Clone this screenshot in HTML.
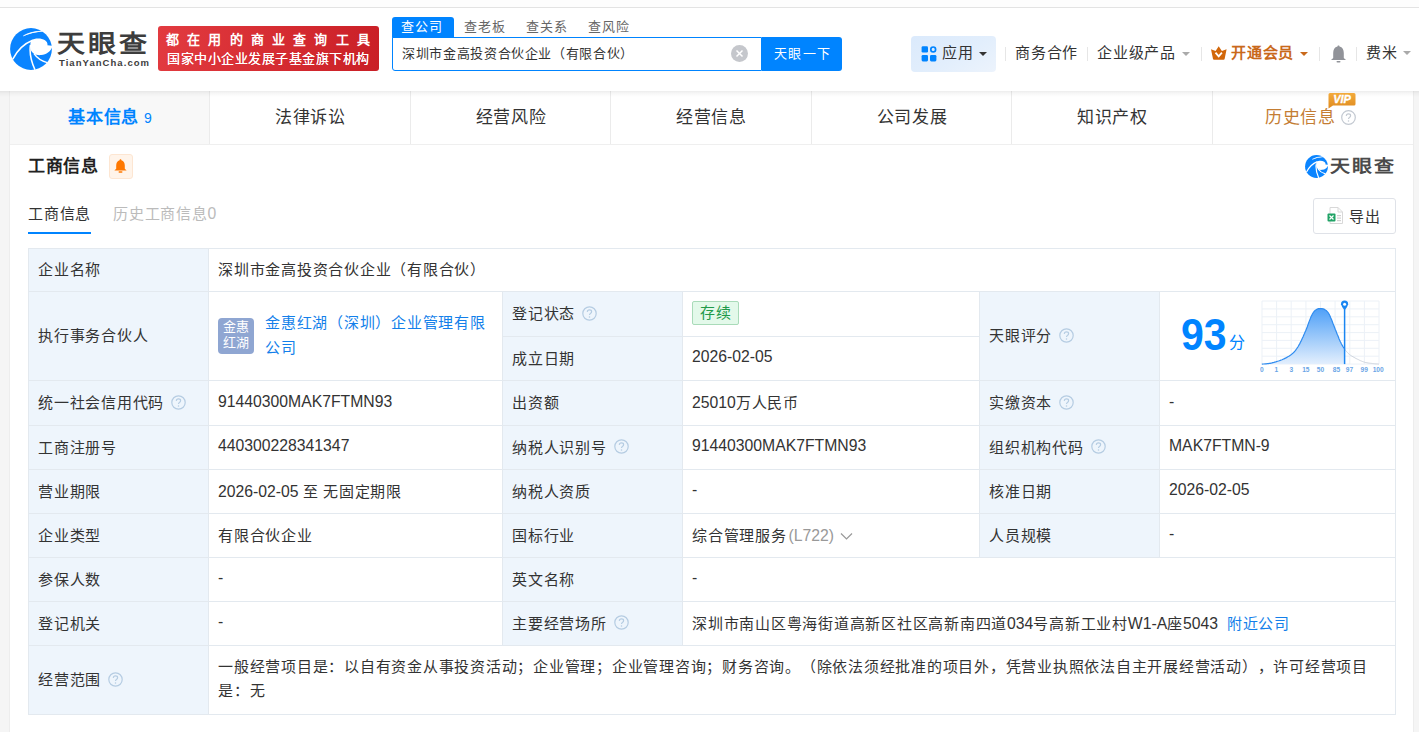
<!DOCTYPE html>
<html lang="zh-CN"><head><meta charset="utf-8"><style>
*{margin:0;padding:0;box-sizing:border-box}
html,body{text-spacing-trim:space-all;width:1419px;height:732px;overflow:hidden;background:#f5f5f5;font-family:"Liberation Sans",sans-serif;color:#333}
.a{position:absolute;white-space:nowrap}
i.n{font-style:normal;letter-spacing:0}
.t{font-size:15px;letter-spacing:.75px;line-height:20px}
.cell{position:absolute;display:flex;align-items:center;white-space:nowrap;font-size:15px;letter-spacing:.75px;color:#333}
.q{display:inline-block;width:15px;height:15px;margin-left:7px;vertical-align:middle;position:relative;top:-2px;letter-spacing:0}
.caret{position:absolute;width:0;height:0;border-left:4px solid transparent;border-right:4px solid transparent;border-top:4px solid #999}
.sep{position:absolute;top:47px;width:1px;height:14px;background:#e6e6e6}
.nav{position:absolute;top:43px;font-size:15px;letter-spacing:.75px;line-height:20px;color:#333;white-space:nowrap}
.tab{position:absolute;top:91px;height:53px;line-height:53px;text-align:center;font-size:17px;letter-spacing:.7px;color:#333;white-space:nowrap}
</style></head><body>
<div class="a" style="left:0;top:0;width:1419px;height:7px;background:#fdfdfd"></div>
<div class="a" style="left:0;top:7px;width:1419px;height:1px;background:#e3e3e3"></div>
<div class="a" style="left:0;top:8px;width:1419px;height:83px;background:#fff;"></div>
<svg class="a" style="left:10px;top:28px" width="42" height="42" viewBox="0 0 42 42">
<circle cx="21" cy="21" r="20.9" fill="#0a84ff"/>
<path d="M21.2 12.2 C24.5 10.2 31 9.6 35 12.3 C36.8 13.6 37.8 15.3 37.4 17.2 L43 17.8 L43 20.2 L42 19.6 C40.5 23.6 36.5 26.6 31.2 27.1 C28.2 27.4 25.8 26.9 24.3 26 C21.6 24.4 20.3 21.8 20.3 18.8 C20.3 16.2 20.6 13.4 21.2 12.2 Z" fill="#fff"/>
<path d="M13.3 7.9 Q21 2.6 32.8 3.2 Q22.5 4.6 13.3 7.9 Z" fill="#fff"/>
<path d="M13.3 7.9 Q21 3.4 32.8 3.2" stroke="#fff" stroke-width="0.9" fill="none"/>
<path d="M2.8 31.2 Q9.5 17.5 22.6 12.2" stroke="#fff" stroke-width="1.5" fill="none"/>
<path d="M20.4 17 Q18.8 28 25 41.8" stroke="#fff" stroke-width="1.5" fill="none"/>
<path d="M24 25.6 Q28.6 32.2 37.2 34.6" stroke="#fff" stroke-width="1.5" fill="none"/>
</svg>
<div class="a" style="left:57px;top:30.5px;font-size:28px;line-height:30px;font-weight:bold;color:#3d3d3d;letter-spacing:3.2px;transform:scaleY(0.86);transform-origin:0 0">天眼查</div>
<div class="a" style="left:59px;top:58px;font-size:9.5px;line-height:10px;font-weight:bold;color:#3d3d3d;letter-spacing:1.05px">TianYanCha.com</div>
<div class="a" style="left:158px;top:26px;width:221px;height:45px;border-radius:3px;background:linear-gradient(100deg,#e23b40 0%,#d42a30 60%,#c91f26 100%)"></div>
<div class="a" style="left:166px;top:31px;font-size:13px;line-height:18px;font-weight:bold;letter-spacing:8.2px;color:#fff">都在用的商业查询工具</div>
<div class="a" style="left:167px;top:50px;font-size:13px;line-height:18px;letter-spacing:.5px;color:#fff;text-shadow:0 0 .5px #fff">国家中小企业发展子基金旗下机构</div>
<div class="a" style="left:392px;top:17px;width:62px;height:21px;background:#0084ff;border-radius:3px 3px 0 0"></div>
<div class="a" style="left:401px;top:17px;font-size:13px;letter-spacing:1.2px;line-height:20px;color:#fff">查公司</div>
<div class="a" style="left:464px;top:17px;font-size:13px;letter-spacing:1.2px;line-height:20px;color:#666">查老板</div>
<div class="a" style="left:526px;top:17px;font-size:13px;letter-spacing:1.2px;line-height:20px;color:#666">查关系</div>
<div class="a" style="left:588px;top:17px;font-size:13px;letter-spacing:1.2px;line-height:20px;color:#666">查风险</div>
<div class="a" style="left:392px;top:37px;width:370px;height:34px;border:1px solid #0084ff;border-radius:0 0 0 3px;background:#fff"></div>
<div class="a" style="left:402px;top:44px;font-size:13px;letter-spacing:.65px;line-height:20px;color:#333">深圳市金高投资合伙企业（有限合伙）</div>
<svg class="a" style="left:731px;top:45px" width="17" height="17" viewBox="0 0 17 17"><circle cx="8.5" cy="8.5" r="8.5" fill="#c5c7cc"/><path d="M5.5 5.5 L11.5 11.5 M11.5 5.5 L5.5 11.5" stroke="#fff" stroke-width="1.5"/></svg>
<div class="a" style="left:762px;top:37px;width:80px;height:34px;background:#0084ff;border-radius:0 3px 3px 0"></div>
<div class="a" style="left:774px;top:44px;font-size:13px;letter-spacing:1.25px;line-height:20px;color:#fff">天眼一下</div>
<div class="a" style="left:911px;top:36px;width:85px;height:36px;border-radius:4px;background:linear-gradient(150deg,#dbeafc 0%,#e2eefc 55%,#ecf3fc 100%)"></div>
<svg class="a" style="left:921px;top:46px" width="16" height="16" viewBox="0 0 16 16">
<rect x="0.6" y="0.2" width="6.4" height="6.4" rx="1.3" fill="#0084ff"/>
<circle cx="12.2" cy="3.4" r="2.4" fill="none" stroke="#0084ff" stroke-width="1.7"/>
<rect x="0.6" y="9" width="6.4" height="6.4" rx="1.3" fill="#0084ff"/>
<rect x="9" y="9" width="6.4" height="6.4" rx="1.3" fill="#0084ff"/>
</svg>
<div class="nav" style="left:942px">应用</div>
<div class="caret" style="left:979px;top:52px;border-top-color:#333"></div>
<div class="sep" style="left:1005px"></div>
<div class="nav" style="left:1015px">商务合作</div>
<div class="sep" style="left:1087px"></div>
<div class="nav" style="left:1097px">企业级产品</div>
<div class="caret" style="left:1182px;top:52px;border-top-color:#aaa"></div>
<div class="sep" style="left:1201px"></div>
<svg class="a" style="left:1211px;top:46px" width="16" height="14" viewBox="0 0 16 14">
<path d="M0 3.2 L4.6 4.9 L7.7 0.2 L10.9 4.9 L15.6 3.2 L13.6 13 Q13.4 13.8 12.6 13.8 L3 13.8 Q2.2 13.8 2 13 Z" fill="#d2670a"/>
<path d="M4.5 6.6 L7.7 10.4 L10.9 6.6" stroke="#fff" stroke-width="1.8" fill="none"/>
</svg>
<div class="nav" style="left:1231px;color:#c9691b;font-weight:bold">开通会员</div>
<div class="caret" style="left:1300px;top:52px;border-top-color:#c9691b"></div>
<div class="sep" style="left:1319px"></div>
<svg class="a" style="left:1330px;top:45px" width="17" height="18" viewBox="0 0 17 18">
<path d="M8.5 0.5 C9.3 0.5 9.5 1 9.5 1.6 C12.5 2.3 13.8 5 13.8 8 L13.8 13 L16 15 L1 15 L3.2 13 L3.2 8 C3.2 5 4.5 2.3 7.5 1.6 C7.5 1 7.7 0.5 8.5 0.5 Z" fill="#919399"/>
<rect x="6.5" y="16" width="4" height="1.6" rx=".8" fill="#919399"/>
</svg>
<div class="sep" style="left:1356px"></div>
<div class="nav" style="left:1366px">费米</div>
<div class="caret" style="left:1403px;top:51px;border-top-color:#aaa"></div>
<div class="a" style="left:9px;top:91px;width:1405px;height:641px;background:#ededed"></div>
<div class="a" style="left:10px;top:91px;width:1403px;height:641px;background:#fff"></div>
<div class="a" style="left:10px;width:200px;top:91px;height:53px;background:#f8f8f8"></div>
<div class="tab" style="left:10px;width:200px;color:#0084ff;font-weight:bold">基本信息<i class="n" style="font-size:14px;font-weight:normal;margin-left:5px">9</i></div>
<div class="a" style="left:209px;top:91px;width:1px;height:53px;background:#ebebeb"></div>
<div class="tab" style="left:210px;width:201px;">法律诉讼</div>
<div class="a" style="left:410px;top:91px;width:1px;height:53px;background:#ebebeb"></div>
<div class="tab" style="left:411px;width:200px;">经营风险</div>
<div class="a" style="left:610px;top:91px;width:1px;height:53px;background:#ebebeb"></div>
<div class="tab" style="left:611px;width:201px;">经营信息</div>
<div class="a" style="left:811px;top:91px;width:1px;height:53px;background:#ebebeb"></div>
<div class="tab" style="left:812px;width:200px;">公司发展</div>
<div class="a" style="left:1011px;top:91px;width:1px;height:53px;background:#ebebeb"></div>
<div class="tab" style="left:1012px;width:201px;">知识产权</div>
<div class="a" style="left:1212px;top:91px;width:1px;height:53px;background:#ebebeb"></div>
<div class="tab" style="left:1213px;width:200px;padding-right:5px;color:#c47d33">历史信息<svg class="q" style="margin-left:5px;top:-1px" viewBox="0 0 15 15"><circle cx="7.5" cy="7.5" r="6.8" fill="none" stroke="#c3c9d1" stroke-width="1.2"/><path d="M5.3 5.9 Q5.4 3.9 7.5 3.9 Q9.6 3.9 9.6 5.7 Q9.6 6.8 8.4 7.4 Q7.5 7.9 7.5 9.1" fill="none" stroke="#c3c9d1" stroke-width="1.2"/><circle cx="7.5" cy="11" r=".75" fill="#c3c9d1"/></svg></div>
<div class="a" style="left:10px;top:144px;width:1403px;height:1px;background:#efefef"></div>
<div class="a" style="left:0;top:91px;width:1419px;height:6px;background:linear-gradient(rgba(0,0,0,.07),rgba(0,0,0,.03) 40%,rgba(0,0,0,0))"></div>
<svg class="a" style="left:1327px;top:92px" width="29" height="17" viewBox="0 0 29 17">
<defs><linearGradient id="vg" x1="0" y1="0" x2="0" y2="1"><stop offset="0" stop-color="#f3ab3c"/><stop offset="1" stop-color="#df8a1f"/></linearGradient></defs>
<path d="M3 1 L27 1 Q28.5 1 28.5 2.5 L28.5 12 Q28.5 13.5 27 13.5 L6 13.5 L1.5 16.5 L1.5 2.5 Q1.5 1 3 1 Z" fill="url(#vg)"/>
<text x="15" y="11.2" text-anchor="middle" font-family="Liberation Sans" font-weight="bold" font-style="italic" font-size="11" fill="#fff" stroke="#fff" stroke-width=".35">VIP</text>
</svg>
<div class="a" style="left:28px;top:155px;font-size:17px;letter-spacing:.7px;line-height:24px;font-weight:bold;color:#222">工商信息</div>
<div class="a" style="left:109px;top:154px;width:24px;height:25px;background:#fff4ea;border:1px solid #fde6d2;border-radius:3px"></div>
<svg class="a" style="left:114px;top:159px" width="13" height="14" viewBox="0 0 13 14">
<path d="M6.5 0.3 C7.2 0.3 7.4 .8 7.4 1.3 C9.8 1.9 10.8 4 10.8 6.5 L10.8 9.8 L12.6 11.6 L.4 11.6 L2.2 9.8 L2.2 6.5 C2.2 4 3.2 1.9 5.6 1.3 C5.6 .8 5.8 .3 6.5 .3 Z" fill="#ff7800"/>
<rect x="4.5" y="12.2" width="4" height="1.6" rx=".8" fill="#ff7800"/>
</svg>
<svg class="a" style="left:1305px;top:155px" width="23" height="23" viewBox="0 0 42 42">
<circle cx="21" cy="21" r="20.9" fill="#0a84ff"/>
<path d="M21.2 12.2 C24.5 10.2 31 9.6 35 12.3 C36.8 13.6 37.8 15.3 37.4 17.2 L43 17.8 L43 20.2 L42 19.6 C40.5 23.6 36.5 26.6 31.2 27.1 C28.2 27.4 25.8 26.9 24.3 26 C21.6 24.4 20.3 21.8 20.3 18.8 C20.3 16.2 20.6 13.4 21.2 12.2 Z" fill="#fff"/>
<path d="M13.3 7.9 Q21 2.6 32.8 3.2 Q22.5 4.6 13.3 7.9 Z" fill="#fff"/>
<path d="M13.3 7.9 Q21 3.4 32.8 3.2" stroke="#fff" stroke-width="1.4" fill="none"/>
<path d="M2.8 31.2 Q9.5 17.5 22.6 12.2" stroke="#fff" stroke-width="2.2" fill="none"/>
<path d="M20.4 17 Q18.8 28 25 41.8" stroke="#fff" stroke-width="2.2" fill="none"/>
<path d="M24 25.6 Q28.6 32.2 37.2 34.6" stroke="#fff" stroke-width="2.2" fill="none"/>
</svg>
<div class="a" style="left:1330px;top:157px;font-size:20px;line-height:22px;font-weight:bold;color:#4a4a4a;letter-spacing:2.2px;transform:scaleY(0.86);transform-origin:0 0">天眼查</div>
<div class="a t" style="left:28px;top:204px;color:#333">工商信息</div>
<div class="a" style="left:28px;top:232px;width:63px;height:2px;background:#0084ff"></div>
<div class="a t" style="left:113px;top:204px;color:#bbb">历史工商信息<i class="n" style="font-size:15.75px">0</i></div>
<div class="a" style="left:1313px;top:198px;width:83px;height:36px;border:1px solid #dfe2e8;border-radius:3px;background:#fff"></div>
<svg class="a" style="left:1327px;top:207px" width="16" height="17" viewBox="0 0 16 17">
<path d="M3 .5 L11 .5 L15.5 5 L15.5 16.5 L3 16.5 Z" fill="#fff" stroke="#d8d8d8"/>
<path d="M11 .5 L11 5 L15.5 5" fill="none" stroke="#d8d8d8"/>
<rect x="10" y="8" width="4" height="1.2" fill="#d0d0d0"/><rect x="10" y="10.5" width="4" height="1.2" fill="#d0d0d0"/><rect x="10" y="13" width="4" height="1.2" fill="#d0d0d0"/>
<rect x=".5" y="6.5" width="8" height="8" rx="1" fill="#21a366"/>
<path d="M2.5 8.5 L6.5 12.5 M6.5 8.5 L2.5 12.5" stroke="#fff" stroke-width="1.2"/>
</svg>
<div class="a t" style="left:1349px;top:207px;color:#333">导出</div>
<div class="a" style="left:28px;top:248px;width:180px;height:466px;background:#eef5fc"></div>
<div class="a" style="left:502px;top:291px;width:180px;height:354px;background:#eef5fc"></div>
<div class="a" style="left:979px;top:291px;width:180px;height:266px;background:#eef5fc"></div>
<div class="a" style="left:28px;top:248px;width:1368px;height:1px;background:#e3e9ef"></div>
<div class="a" style="left:28px;top:291px;width:1368px;height:1px;background:#e3e9ef"></div>
<div class="a" style="left:28px;top:380px;width:1368px;height:1px;background:#e3e9ef"></div>
<div class="a" style="left:28px;top:425px;width:1368px;height:1px;background:#e3e9ef"></div>
<div class="a" style="left:28px;top:469px;width:1368px;height:1px;background:#e3e9ef"></div>
<div class="a" style="left:28px;top:513px;width:1368px;height:1px;background:#e3e9ef"></div>
<div class="a" style="left:28px;top:557px;width:1368px;height:1px;background:#e3e9ef"></div>
<div class="a" style="left:28px;top:601px;width:1368px;height:1px;background:#e3e9ef"></div>
<div class="a" style="left:28px;top:645px;width:1368px;height:1px;background:#e3e9ef"></div>
<div class="a" style="left:28px;top:714px;width:1368px;height:1px;background:#e3e9ef"></div>
<div class="a" style="left:502px;top:336px;width:478px;height:1px;background:#e3e9ef"></div>
<div class="a" style="left:28px;top:248px;width:1px;height:467px;background:#e3e9ef"></div>
<div class="a" style="left:1395px;top:248px;width:1px;height:467px;background:#e3e9ef"></div>
<div class="a" style="left:208px;top:248px;width:1px;height:467px;background:#e3e9ef"></div>
<div class="a" style="left:502px;top:291px;width:1px;height:355px;background:#e3e9ef"></div>
<div class="a" style="left:682px;top:291px;width:1px;height:355px;background:#e3e9ef"></div>
<div class="a" style="left:979px;top:291px;width:1px;height:267px;background:#e3e9ef"></div>
<div class="a" style="left:1159px;top:291px;width:1px;height:267px;background:#e3e9ef"></div>
<div class="cell" style="left:38px;top:248px;height:41px"><span>企业名称</span></div>
<div class="cell" style="left:218px;top:248px;height:41px"><span>深圳市金高投资合伙企业（有限合伙）</span></div>
<div class="cell" style="left:38px;top:291px;height:87px"><span>执行事务合伙人</span></div>
<div class="cell" style="left:38px;top:380px;height:43px"><span>统一社会信用代码<svg class="q" viewBox="0 0 15 15"><circle cx="7.5" cy="7.5" r="6.7" fill="none" stroke="#b5cce2" stroke-width="1.2"/><path d="M5.3 5.9 Q5.4 3.9 7.5 3.9 Q9.6 3.9 9.6 5.7 Q9.6 6.8 8.4 7.4 Q7.5 7.9 7.5 9.1" fill="none" stroke="#b5cce2" stroke-width="1.2"/><circle cx="7.5" cy="11" r=".75" fill="#b5cce2"/></svg></span></div>
<div class="cell" style="left:218px;top:380px;height:43px"><span><i class="n" style="font-size:15.75px">91440300MAK7FTMN93</i></span></div>
<div class="cell" style="left:38px;top:425px;height:42px"><span>工商注册号</span></div>
<div class="cell" style="left:218px;top:425px;height:42px"><span><i class="n" style="font-size:15.75px">440300228341347</i></span></div>
<div class="cell" style="left:38px;top:469px;height:42px"><span>营业期限</span></div>
<div class="cell" style="left:218px;top:469px;height:42px"><span><i class="n" style="font-size:15.75px">2026-02-05 </i>至<i class="n" style="font-size:15.75px"> </i>无固定期限</span></div>
<div class="cell" style="left:38px;top:513px;height:42px"><span>企业类型</span></div>
<div class="cell" style="left:218px;top:513px;height:42px"><span>有限合伙企业</span></div>
<div class="cell" style="left:38px;top:557px;height:42px"><span>参保人数</span></div>
<div class="cell" style="left:218px;top:557px;height:42px"><span><i class="n" style="font-size:15.75px">-</i></span></div>
<div class="cell" style="left:38px;top:601px;height:42px"><span>登记机关</span></div>
<div class="cell" style="left:218px;top:601px;height:42px"><span><i class="n" style="font-size:15.75px">-</i></span></div>
<div class="cell" style="left:38px;top:645px;height:67px"><span>经营范围<svg class="q" viewBox="0 0 15 15"><circle cx="7.5" cy="7.5" r="6.7" fill="none" stroke="#b5cce2" stroke-width="1.2"/><path d="M5.3 5.9 Q5.4 3.9 7.5 3.9 Q9.6 3.9 9.6 5.7 Q9.6 6.8 8.4 7.4 Q7.5 7.9 7.5 9.1" fill="none" stroke="#b5cce2" stroke-width="1.2"/><circle cx="7.5" cy="11" r=".75" fill="#b5cce2"/></svg></span></div>
<div class="cell" style="left:512px;top:291px;height:43px"><span>登记状态<svg class="q" viewBox="0 0 15 15"><circle cx="7.5" cy="7.5" r="6.7" fill="none" stroke="#b5cce2" stroke-width="1.2"/><path d="M5.3 5.9 Q5.4 3.9 7.5 3.9 Q9.6 3.9 9.6 5.7 Q9.6 6.8 8.4 7.4 Q7.5 7.9 7.5 9.1" fill="none" stroke="#b5cce2" stroke-width="1.2"/><circle cx="7.5" cy="11" r=".75" fill="#b5cce2"/></svg></span></div>
<div class="cell" style="left:512px;top:336px;height:42px"><span>成立日期</span></div>
<div class="cell" style="left:512px;top:380px;height:43px"><span>出资额</span></div>
<div class="cell" style="left:512px;top:425px;height:42px"><span>纳税人识别号<svg class="q" viewBox="0 0 15 15"><circle cx="7.5" cy="7.5" r="6.7" fill="none" stroke="#b5cce2" stroke-width="1.2"/><path d="M5.3 5.9 Q5.4 3.9 7.5 3.9 Q9.6 3.9 9.6 5.7 Q9.6 6.8 8.4 7.4 Q7.5 7.9 7.5 9.1" fill="none" stroke="#b5cce2" stroke-width="1.2"/><circle cx="7.5" cy="11" r=".75" fill="#b5cce2"/></svg></span></div>
<div class="cell" style="left:512px;top:469px;height:42px"><span>纳税人资质</span></div>
<div class="cell" style="left:512px;top:513px;height:42px"><span>国标行业</span></div>
<div class="cell" style="left:512px;top:557px;height:42px"><span>英文名称</span></div>
<div class="cell" style="left:512px;top:601px;height:42px"><span>主要经营场所<svg class="q" viewBox="0 0 15 15"><circle cx="7.5" cy="7.5" r="6.7" fill="none" stroke="#b5cce2" stroke-width="1.2"/><path d="M5.3 5.9 Q5.4 3.9 7.5 3.9 Q9.6 3.9 9.6 5.7 Q9.6 6.8 8.4 7.4 Q7.5 7.9 7.5 9.1" fill="none" stroke="#b5cce2" stroke-width="1.2"/><circle cx="7.5" cy="11" r=".75" fill="#b5cce2"/></svg></span></div>
<div class="cell" style="left:692px;top:291px;height:43px"><span><span style="display:inline-block;height:24px;line-height:22px;padding:0 6px 0 7px;border:1px solid #a9dbb9;background:#e3f9ea;color:#1f9a4a;border-radius:2px;font-size:15px;letter-spacing:.75px;position:relative;top:0px">存续</span></span></div>
<div class="cell" style="left:692px;top:336px;height:42px"><span><i class="n" style="font-size:15.75px">2026-02-05</i></span></div>
<div class="cell" style="left:692px;top:380px;height:43px"><span><i class="n" style="font-size:15.75px">25010</i>万人民币</span></div>
<div class="cell" style="left:692px;top:425px;height:42px"><span><i class="n" style="font-size:15.75px">91440300MAK7FTMN93</i></span></div>
<div class="cell" style="left:692px;top:469px;height:42px"><span><i class="n" style="font-size:15.75px">-</i></span></div>
<div class="cell" style="left:692px;top:513px;height:42px"><span>综合管理服务<span style="color:#999;margin-left:2px"><i class="n" style="font-size:15.75px">(L722)</i></span><svg width="13" height="12" viewBox="0 0 13 12" style="margin-left:6px;vertical-align:middle;position:relative;top:-1px"><path d="M1 3.5 L6.5 9 L12 3.5" fill="none" stroke="#999" stroke-width="1.2"/></svg></span></div>
<div class="cell" style="left:692px;top:557px;height:42px"><span><i class="n" style="font-size:15.75px">-</i></span></div>
<div class="cell" style="left:692px;top:601px;height:42px"><span>深圳市南山区粤海街道高新区社区高新南四道<i class="n" style="font-size:15.75px">034</i>号高新工业村<i class="n" style="font-size:15.75px">W1-A</i>座<i class="n" style="font-size:15.75px">5043</i><span style="color:#137fea;margin-left:9px">附近公司</span></span></div>
<div class="cell" style="left:989px;top:291px;height:87px"><span>天眼评分<svg class="q" viewBox="0 0 15 15"><circle cx="7.5" cy="7.5" r="6.7" fill="none" stroke="#b5cce2" stroke-width="1.2"/><path d="M5.3 5.9 Q5.4 3.9 7.5 3.9 Q9.6 3.9 9.6 5.7 Q9.6 6.8 8.4 7.4 Q7.5 7.9 7.5 9.1" fill="none" stroke="#b5cce2" stroke-width="1.2"/><circle cx="7.5" cy="11" r=".75" fill="#b5cce2"/></svg></span></div>
<div class="cell" style="left:989px;top:380px;height:43px"><span>实缴资本<svg class="q" viewBox="0 0 15 15"><circle cx="7.5" cy="7.5" r="6.7" fill="none" stroke="#b5cce2" stroke-width="1.2"/><path d="M5.3 5.9 Q5.4 3.9 7.5 3.9 Q9.6 3.9 9.6 5.7 Q9.6 6.8 8.4 7.4 Q7.5 7.9 7.5 9.1" fill="none" stroke="#b5cce2" stroke-width="1.2"/><circle cx="7.5" cy="11" r=".75" fill="#b5cce2"/></svg></span></div>
<div class="cell" style="left:989px;top:425px;height:42px"><span>组织机构代码<svg class="q" viewBox="0 0 15 15"><circle cx="7.5" cy="7.5" r="6.7" fill="none" stroke="#b5cce2" stroke-width="1.2"/><path d="M5.3 5.9 Q5.4 3.9 7.5 3.9 Q9.6 3.9 9.6 5.7 Q9.6 6.8 8.4 7.4 Q7.5 7.9 7.5 9.1" fill="none" stroke="#b5cce2" stroke-width="1.2"/><circle cx="7.5" cy="11" r=".75" fill="#b5cce2"/></svg></span></div>
<div class="cell" style="left:989px;top:469px;height:42px"><span>核准日期</span></div>
<div class="cell" style="left:989px;top:513px;height:42px"><span>人员规模</span></div>
<div class="cell" style="left:1169px;top:380px;height:43px"><span><i class="n" style="font-size:15.75px">-</i></span></div>
<div class="cell" style="left:1169px;top:425px;height:42px"><span><i class="n" style="font-size:15.75px">MAK7FTMN-9</i></span></div>
<div class="cell" style="left:1169px;top:469px;height:42px"><span><i class="n" style="font-size:15.75px">2026-02-05</i></span></div>
<div class="cell" style="left:1169px;top:513px;height:42px"><span><i class="n" style="font-size:15.75px">-</i></span></div>
<div class="a" style="left:218px;top:655px;font-size:15px;letter-spacing:.75px;line-height:24px;color:#333">一般经营项目是：以自有资金从事投资活动；企业管理；企业管理咨询；财务咨询。（除依法须经批准的项目外，凭营业执照依法自主开展经营活动），许可经营项目<br>是：无</div>
<div class="a" style="left:218px;top:318px;width:36px;height:36px;border-radius:4px;background:#8fa6d2"></div>
<div class="a" style="left:219px;top:319px;width:34px;font-size:13px;letter-spacing:.5px;line-height:16px;color:#fff;text-align:center;white-space:normal">金惠<br>红湖</div>
<div class="a" style="left:265px;top:310px;font-size:15px;letter-spacing:.75px;line-height:25px;color:#137fea">金惠红湖（深圳）企业管理有限<br>公司</div>
<div class="a" style="left:1181px;top:310px;font-size:41px;line-height:48px;font-weight:bold;color:#0084ff;transform:scaleY(1.06);transform-origin:0 0">93</div>
<div class="a" style="left:1229px;top:333px;font-size:16px;line-height:20px;color:#0084ff">分</div>
<svg class="a" style="left:1260px;top:295.5px" width="127" height="79.10000000000002" viewBox="1260 295.5 127 79.10000000000002">
<defs><linearGradient id="cg" x1="0" y1="0" x2="0" y2="1"><stop offset="0" stop-color="#4fa0f7"/><stop offset="1" stop-color="#e3effd"/></linearGradient></defs>
<line x1="1262.0" y1="300.5" x2="1262.0" y2="363.6" stroke="#ecf1f7" stroke-width="1"/>
<line x1="1262" y1="300.5" x2="1379" y2="300.5" stroke="#ecf1f7" stroke-width="1"/>
<line x1="1276.6" y1="300.5" x2="1276.6" y2="363.6" stroke="#ecf1f7" stroke-width="1"/>
<line x1="1262" y1="308.4" x2="1379" y2="308.4" stroke="#ecf1f7" stroke-width="1"/>
<line x1="1291.2" y1="300.5" x2="1291.2" y2="363.6" stroke="#ecf1f7" stroke-width="1"/>
<line x1="1262" y1="316.3" x2="1379" y2="316.3" stroke="#ecf1f7" stroke-width="1"/>
<line x1="1305.9" y1="300.5" x2="1305.9" y2="363.6" stroke="#ecf1f7" stroke-width="1"/>
<line x1="1262" y1="324.2" x2="1379" y2="324.2" stroke="#ecf1f7" stroke-width="1"/>
<line x1="1320.5" y1="300.5" x2="1320.5" y2="363.6" stroke="#ecf1f7" stroke-width="1"/>
<line x1="1262" y1="332.1" x2="1379" y2="332.1" stroke="#ecf1f7" stroke-width="1"/>
<line x1="1335.1" y1="300.5" x2="1335.1" y2="363.6" stroke="#ecf1f7" stroke-width="1"/>
<line x1="1262" y1="339.9" x2="1379" y2="339.9" stroke="#ecf1f7" stroke-width="1"/>
<line x1="1349.8" y1="300.5" x2="1349.8" y2="363.6" stroke="#ecf1f7" stroke-width="1"/>
<line x1="1262" y1="347.8" x2="1379" y2="347.8" stroke="#ecf1f7" stroke-width="1"/>
<line x1="1364.4" y1="300.5" x2="1364.4" y2="363.6" stroke="#ecf1f7" stroke-width="1"/>
<line x1="1262" y1="355.7" x2="1379" y2="355.7" stroke="#ecf1f7" stroke-width="1"/>
<line x1="1379.0" y1="300.5" x2="1379.0" y2="363.6" stroke="#ecf1f7" stroke-width="1"/>
<line x1="1262" y1="363.6" x2="1379" y2="363.6" stroke="#ecf1f7" stroke-width="1"/>
<path d="M1261.8 363.6 L1262.3 363.6 L1263.1 363.5 L1264.0 363.5 L1265.0 363.4 L1266.1 363.3 L1267.2 363.2 L1268.2 363.1 L1269.2 362.9 L1270.1 362.8 L1271.1 362.6 L1272.0 362.4 L1272.9 362.1 L1273.9 361.9 L1274.8 361.6 L1275.7 361.4 L1276.6 361.1 L1277.5 360.8 L1278.5 360.5 L1279.4 360.2 L1280.3 359.9 L1281.2 359.5 L1282.1 359.2 L1283.0 358.8 L1283.9 358.4 L1284.9 357.9 L1285.9 357.4 L1286.8 356.9 L1287.8 356.3 L1288.8 355.8 L1289.7 355.2 L1290.6 354.6 L1291.4 354.0 L1292.1 353.4 L1292.8 352.8 L1293.5 352.1 L1294.1 351.5 L1294.7 350.8 L1295.3 350.1 L1295.9 349.3 L1296.5 348.5 L1297.1 347.7 L1297.6 346.8 L1298.2 346.0 L1298.7 345.0 L1299.2 344.1 L1299.8 343.1 L1300.3 342.0 L1300.9 340.9 L1301.5 339.7 L1302.0 338.5 L1302.6 337.2 L1303.2 335.9 L1303.8 334.5 L1304.5 333.1 L1305.1 331.6 L1305.8 330.0 L1306.5 328.2 L1307.3 326.2 L1308.0 324.1 L1308.8 322.0 L1309.6 319.9 L1310.4 317.9 L1311.1 316.1 L1311.8 314.7 L1312.4 313.5 L1313.0 312.5 L1313.6 311.7 L1314.1 311.0 L1314.6 310.5 L1315.1 310.0 L1315.6 309.6 L1316.2 309.2 L1316.7 308.8 L1317.3 308.6 L1317.8 308.4 L1318.4 308.2 L1318.9 308.2 L1319.5 308.1 L1320.0 308.1 L1320.5 308.1 L1321.1 308.1 L1321.6 308.1 L1322.2 308.2 L1322.7 308.3 L1323.3 308.4 L1323.8 308.6 L1324.4 308.9 L1324.9 309.2 L1325.4 309.6 L1326.0 309.9 L1326.5 310.3 L1327.0 310.8 L1327.5 311.4 L1328.1 312.1 L1328.7 313.0 L1329.3 314.1 L1330.0 315.5 L1330.7 317.2 L1331.5 319.0 L1332.3 321.0 L1333.0 323.1 L1333.8 325.1 L1334.6 327.1 L1335.3 328.9 L1336.0 330.5 L1336.6 332.2 L1337.2 333.8 L1337.9 335.3 L1338.5 336.8 L1339.0 338.2 L1339.6 339.6 L1340.2 340.9 L1340.8 342.1 L1341.3 343.2 L1341.9 344.2 L1342.4 345.1 L1342.9 346.0 L1343.5 346.9 L1344.0 347.7 L1344.6 348.5 L1344.6 363.6 L1262 363.6 Z" fill="url(#cg)"/>
<path d="M1261.8 363.6 L1262.3 363.6 L1263.1 363.5 L1264.0 363.5 L1265.0 363.4 L1266.1 363.3 L1267.2 363.2 L1268.2 363.1 L1269.2 362.9 L1270.1 362.8 L1271.1 362.6 L1272.0 362.4 L1272.9 362.1 L1273.9 361.9 L1274.8 361.6 L1275.7 361.4 L1276.6 361.1 L1277.5 360.8 L1278.5 360.5 L1279.4 360.2 L1280.3 359.9 L1281.2 359.5 L1282.1 359.2 L1283.0 358.8 L1283.9 358.4 L1284.9 357.9 L1285.9 357.4 L1286.8 356.9 L1287.8 356.3 L1288.8 355.8 L1289.7 355.2 L1290.6 354.6 L1291.4 354.0 L1292.1 353.4 L1292.8 352.8 L1293.5 352.1 L1294.1 351.5 L1294.7 350.8 L1295.3 350.1 L1295.9 349.3 L1296.5 348.5 L1297.1 347.7 L1297.6 346.8 L1298.2 346.0 L1298.7 345.0 L1299.2 344.1 L1299.8 343.1 L1300.3 342.0 L1300.9 340.9 L1301.5 339.7 L1302.0 338.5 L1302.6 337.2 L1303.2 335.9 L1303.8 334.5 L1304.5 333.1 L1305.1 331.6 L1305.8 330.0 L1306.5 328.2 L1307.3 326.2 L1308.0 324.1 L1308.8 322.0 L1309.6 319.9 L1310.4 317.9 L1311.1 316.1 L1311.8 314.7 L1312.4 313.5 L1313.0 312.5 L1313.6 311.7 L1314.1 311.0 L1314.6 310.5 L1315.1 310.0 L1315.6 309.6 L1316.2 309.2 L1316.7 308.8 L1317.3 308.6 L1317.8 308.4 L1318.4 308.2 L1318.9 308.2 L1319.5 308.1 L1320.0 308.1 L1320.5 308.1 L1321.1 308.1 L1321.6 308.1 L1322.2 308.2 L1322.7 308.3 L1323.3 308.4 L1323.8 308.6 L1324.4 308.9 L1324.9 309.2 L1325.4 309.6 L1326.0 309.9 L1326.5 310.3 L1327.0 310.8 L1327.5 311.4 L1328.1 312.1 L1328.7 313.0 L1329.3 314.1 L1330.0 315.5 L1330.7 317.2 L1331.5 319.0 L1332.3 321.0 L1333.0 323.1 L1333.8 325.1 L1334.6 327.1 L1335.3 328.9 L1336.0 330.5 L1336.6 332.2 L1337.2 333.8 L1337.9 335.3 L1338.5 336.8 L1339.0 338.2 L1339.6 339.6 L1340.2 340.9 L1340.8 342.1 L1341.3 343.2 L1341.9 344.2 L1342.4 345.1 L1342.9 346.0 L1343.5 346.9 L1344.0 347.7 L1344.6 348.5" fill="none" stroke="#2f8cf0" stroke-width="1.2"/>
<path d="M1344.0 347.7 L1344.6 348.5 L1345.2 349.3 L1345.7 350.1 L1346.3 350.8 L1346.9 351.5 L1347.5 352.1 L1348.1 352.8 L1348.8 353.4 L1349.5 354.0 L1350.3 354.6 L1351.2 355.2 L1352.1 355.8 L1353.0 356.3 L1354.0 356.8 L1354.9 357.4 L1355.9 357.9 L1356.8 358.4 L1357.7 358.8 L1358.7 359.3 L1359.6 359.8 L1360.5 360.2 L1361.5 360.6 L1362.4 361.0 L1363.3 361.3 L1364.2 361.6 L1365.2 361.9 L1366.1 362.1 L1367.0 362.3 L1368.0 362.5 L1368.9 362.6 L1369.8 362.7 L1370.7 362.8 L1371.7 362.9 L1372.6 363.1 L1373.7 363.2 L1374.7 363.3 L1375.8 363.4 L1376.8 363.4 L1377.7 363.5 L1378.4 363.6 L1379.0 363.6" fill="none" stroke="#cdd3dc" stroke-width="1"/>
<line x1="1344.6" y1="306" x2="1344.6" y2="363.6" stroke="#1a86f2" stroke-width="1.5"/>
<path d="M1341.0 303.7 A3.6 3.6 0 1 1 1348.1999999999998 303.7 Q1347.8 306 1344.6 309.7 Q1341.3999999999999 306 1341.0 303.7 Z" fill="#1a86f2"/>
<circle cx="1344.6" cy="303.7" r="1.5" fill="#fff"/>
<text x="1261.8" y="371.5" text-anchor="middle" font-family="Liberation Sans" font-size="6.6" font-weight="bold" fill="#6aa5e6">0</text>
<text x="1276.3" y="371.5" text-anchor="middle" font-family="Liberation Sans" font-size="6.6" font-weight="bold" fill="#6aa5e6">1</text>
<text x="1291.4" y="371.5" text-anchor="middle" font-family="Liberation Sans" font-size="6.6" font-weight="bold" fill="#6aa5e6">3</text>
<text x="1305.8" y="371.5" text-anchor="middle" font-family="Liberation Sans" font-size="6.6" font-weight="bold" fill="#6aa5e6">15</text>
<text x="1320.5" y="371.5" text-anchor="middle" font-family="Liberation Sans" font-size="6.6" font-weight="bold" fill="#6aa5e6">50</text>
<text x="1336.4" y="371.5" text-anchor="middle" font-family="Liberation Sans" font-size="6.6" font-weight="bold" fill="#6aa5e6">85</text>
<text x="1349.5" y="371.5" text-anchor="middle" font-family="Liberation Sans" font-size="6.6" font-weight="bold" fill="#6aa5e6">97</text>
<text x="1364.2" y="371.5" text-anchor="middle" font-family="Liberation Sans" font-size="6.6" font-weight="bold" fill="#6aa5e6">99</text>
<text x="1378.2" y="371.5" text-anchor="middle" font-family="Liberation Sans" font-size="6.6" font-weight="bold" fill="#6aa5e6">100</text>
</svg>
</body></html>
